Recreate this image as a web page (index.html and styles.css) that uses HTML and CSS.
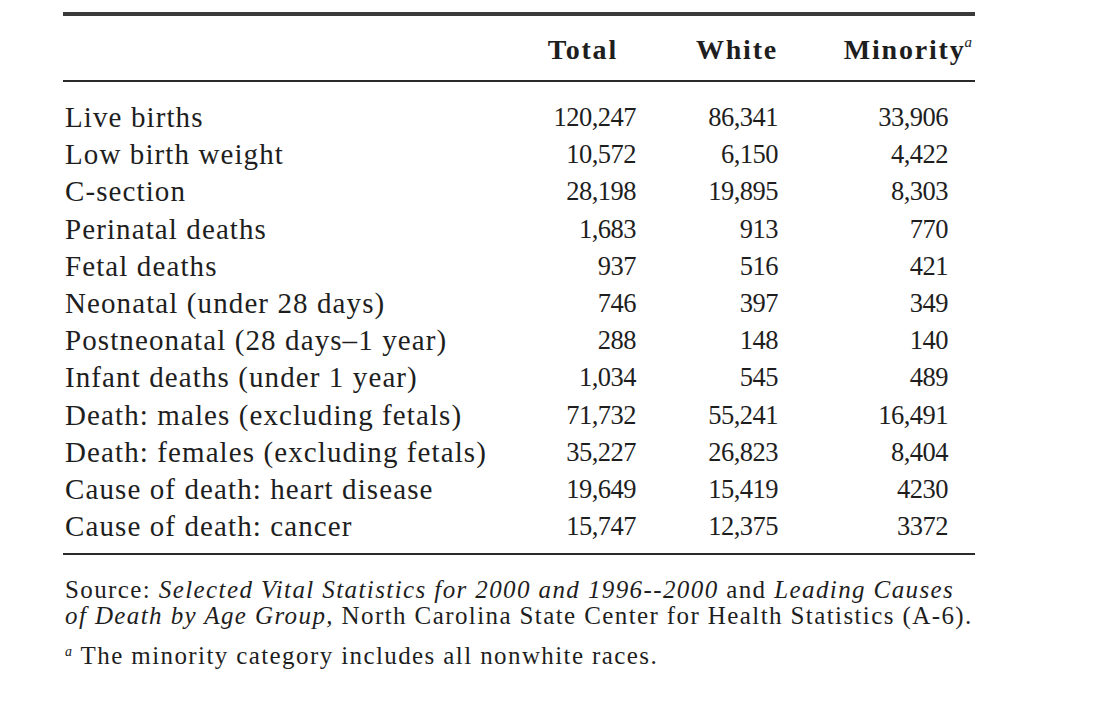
FILE: index.html
```html
<!DOCTYPE html>
<html>
<head>
<meta charset="utf-8">
<link rel="stylesheet" href="styles.css">
</head>
<body>
<div class="page">
  <div class="rule-top"></div>
  <div class="grid head">
    <div class="lab"></div>
    <div class="h h-total">Total</div>
    <div class="h h-white">White</div>
    <div class="h h-min">Minority<sup>a</sup></div>
  </div>
  <div class="rule-mid"></div>
  <div class="body">
    <div class="grid row"><div class="lab">Live births</div><div class="n c1">120,247</div><div class="n c2">86,341</div><div class="n c3">33,906</div></div>
    <div class="grid row"><div class="lab">Low birth weight</div><div class="n c1">10,572</div><div class="n c2">6,150</div><div class="n c3">4,422</div></div>
    <div class="grid row"><div class="lab">C-section</div><div class="n c1">28,198</div><div class="n c2">19,895</div><div class="n c3">8,303</div></div>
    <div class="grid row"><div class="lab">Perinatal deaths</div><div class="n c1">1,683</div><div class="n c2">913</div><div class="n c3">770</div></div>
    <div class="grid row"><div class="lab">Fetal deaths</div><div class="n c1">937</div><div class="n c2">516</div><div class="n c3">421</div></div>
    <div class="grid row"><div class="lab">Neonatal (under 28 days)</div><div class="n c1">746</div><div class="n c2">397</div><div class="n c3">349</div></div>
    <div class="grid row"><div class="lab">Postneonatal (28 days–1 year)</div><div class="n c1">288</div><div class="n c2">148</div><div class="n c3">140</div></div>
    <div class="grid row"><div class="lab">Infant deaths (under 1 year)</div><div class="n c1">1,034</div><div class="n c2">545</div><div class="n c3">489</div></div>
    <div class="grid row"><div class="lab">Death: males (excluding fetals)</div><div class="n c1">71,732</div><div class="n c2">55,241</div><div class="n c3">16,491</div></div>
    <div class="grid row"><div class="lab">Death: females (excluding fetals)</div><div class="n c1">35,227</div><div class="n c2">26,823</div><div class="n c3">8,404</div></div>
    <div class="grid row"><div class="lab">Cause of death: heart disease</div><div class="n c1">19,649</div><div class="n c2">15,419</div><div class="n c3">4230</div></div>
    <div class="grid row"><div class="lab">Cause of death: cancer</div><div class="n c1">15,747</div><div class="n c2">12,375</div><div class="n c3">3372</div></div>
  </div>
  <div class="rule-bot"></div>
  <div class="notes">
    <p class="src">Source: <i>Selected Vital Statistics for 2000 and 1996--2000</i> and <i>Leading Causes<br>of Death by Age Group,</i> North Carolina State Center for Health Statistics (A-6).</p>
    <p class="fn"><i class="mark">a</i> The minority category includes all nonwhite races.</p>
  </div>
</div>
</body>
</html>
```

FILE: styles.css
```css
html, body {
  margin: 0;
  padding: 0;
  background: #ffffff;
}
body {
  font-family: "Liberation Serif", "Times New Roman", serif;
  color: #1e1e1e;
}
.page {
  width: 912px;
  margin-left: 63px;
  padding-top: 12px;
}
.rule-top {
  height: 4px;
  background: #3a3a3a;
}
.rule-mid {
  height: 2px;
  background: #2a2a2a;
}
.rule-bot {
  height: 2px;
  background: #2a2a2a;
}
.grid {
  display: grid;
  grid-template-columns: 457px 116px 142px 197px;
  align-items: center;
}
.head {
  height: 64px;
  font-weight: bold;
  font-size: 28px;
  letter-spacing: 1.8px;
}
.h {
  text-align: right;
  padding-top: 4px;
  white-space: nowrap;
}
.h-total { padding-right: 18px; }
.h-white { padding-right: 0px; }
.h-min { padding-right: 3px; }
.h-min sup {
  font-style: italic;
  font-weight: normal;
  font-size: 15px;
  vertical-align: 12px;
  line-height: 0;
  letter-spacing: 0;
  margin-left: -1px;
}
.body {
  padding-top: 17px;
  padding-bottom: 8px;
}
.row {
  height: 37.2px;
  font-size: 26.5px;
}
.lab {
  padding-left: 2px;
  white-space: nowrap;
  font-size: 29px;
  letter-spacing: 1.1px;
}
.n {
  text-align: right;
  letter-spacing: -0.5px;
}
.c3 { padding-right: 27px; }
.notes {
  padding-top: 22px;
  font-size: 25px;
  letter-spacing: 1.4px;
  padding-left: 2px;
  width: 920px;
  white-space: nowrap;
}
.src {
  margin: 0;
  line-height: 26px;
}
.fn {
  margin: 14px 0 0 0;
  line-height: 26px;
}
.mark {
  font-size: 14px;
  vertical-align: 8px;
  line-height: 0;
}
```
